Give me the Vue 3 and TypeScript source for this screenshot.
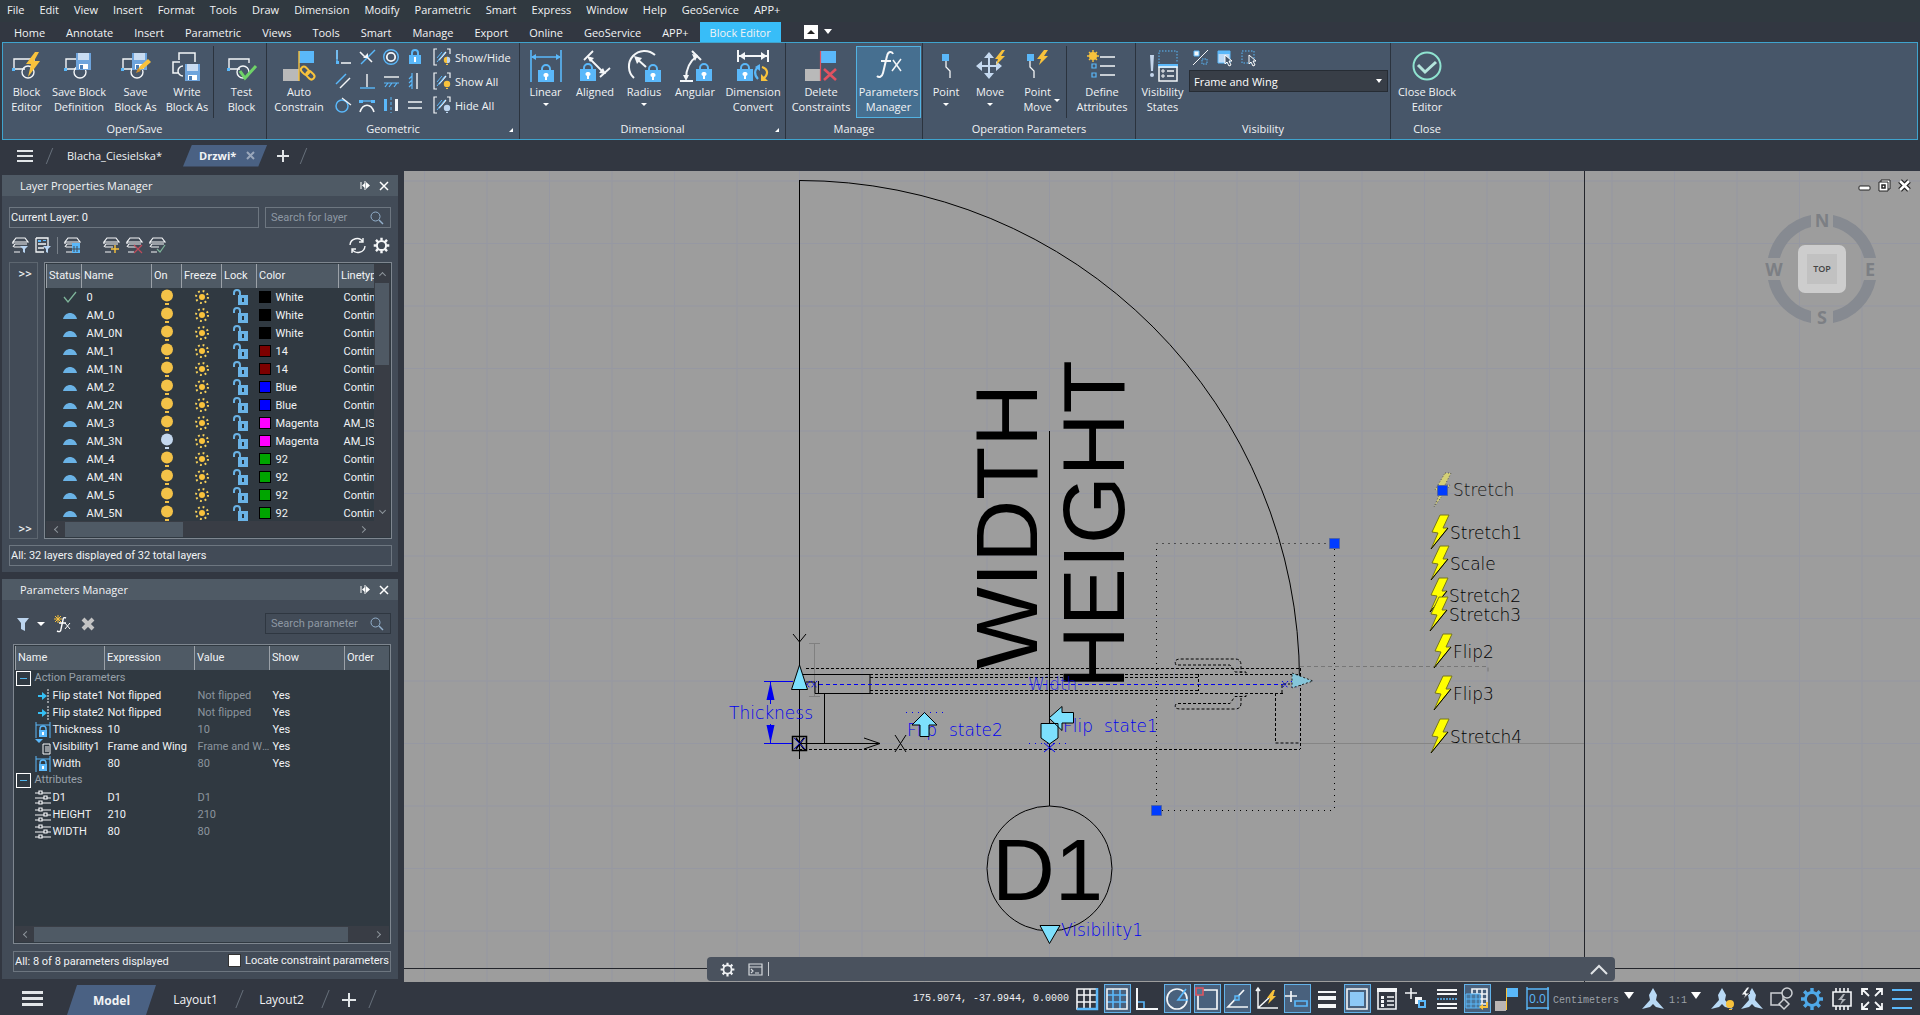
<script setup lang="ts">
import { ref } from 'vue'

interface Tool { icon: string; lines: string[]; width: number; caret?: 'below' | 'side'; active?: boolean; before?: boolean }
interface Layer { name: string; color: string; label: string; line: string; off?: boolean; current?: boolean }
interface Param { icon: string; name: string; expr: string; value: string; show: string }

const B = '#5ab8fa'
const W = '#f4f6f8'
const Y = '#f8c23c'

const lock = (x: number, y: number) =>
  `<path d="M${x + 4} ${y + 7}V${y + 5}a4 4 0 0 1 8 0v2" fill="none" stroke="${B}" stroke-width="2"/><rect x="${x}" y="${y + 6}" width="16" height="12" fill="${B}"/><path d="M${x + 8} ${y + 9}a2 2 0 0 1 1 4v3h-2v-3a2 2 0 0 1 1-4z" fill="#fff"/>`
const disk = (x: number, y: number) =>
  `<path d="M${x} ${y}h15v17h-15z" fill="#6ea4dc"/><path d="M${x + 2} ${y}h11v7h-11z" fill="#c9dcf2"/><path d="M${x + 3} ${y + 11}h9v5h-9z" fill="#fff"/><path d="M${x + 4} ${y + 12}h3v4h-3z" fill="#4a7db5"/>`
const block = `<path d="M3 19V9h20v4M3 19h11" fill="none" stroke="${W}" stroke-width="1.4"/><circle cx="17" cy="22" r="6" fill="none" stroke="${W}" stroke-width="1.4"/><path d="M1 18h3v3h-3z" fill="${B}"/>`
const wheel = (c: string) =>
  `<g fill="none" stroke="${c}"><circle cx="12" cy="12" r="6.500" stroke-width="2.800"/><path d="M12 1v4M12 19v4M1 12h4M19 12h4M4.200 4.200l3 3M16.800 16.800l3 3M19.800 4.200l-3 3M7.200 16.800l-3 3" stroke-width="3.400"/></g>`
const layers = `<path d="M4 1h9l3 4H1zM1 5v2M2 10h8M2 15h6M1 10l2-3h12" fill="none" stroke="${W}" stroke-width="1.2"/>`
const tri = `<path d="M12 1l4 7-1 5 8 9-8-2-3-3-3 3-8 2 8-9-1-5z" fill="#b8d9f5"/>`

const icons: Record<string, string> = {
  blockEditor: block + `<path d="M24 2l-9 12h5l-3 13 12-16h-6l5-9z" fill="${Y}"/>`,
  saveDef: block + disk(13, 3),
  saveAs: block + disk(12, 3) + `<path d="M18 20l2-4 8-7 3 3-8 7z" fill="${Y}"/><path d="M16 23l2-5 3 3z" fill="#c98a2b"/>`,
  writeAs: `<path d="M8 10V3h16v9M9 12H2v11h5M12 16a5 5 0 0 0 0 10" fill="none" stroke="${W}" stroke-width="1.5"/>` + disk(14, 14),
  testBlock: block + `<path d="M14 21l5 7 11-12" fill="none" stroke="#6fd268" stroke-width="3"/>`,
  auto: `<path d="M0 19h16v12h-16z" fill="#b9b9b9"/><path d="M16 1h15v12h-15z" fill="${B}"/><path d="M16 1v30" stroke="${Y}" stroke-width="1.400"/><g fill="none" stroke="${Y}" stroke-width="2"><rect x="18" y="17.500" width="9" height="6" rx="3" transform="rotate(45 22 20)"/><rect x="23" y="22" width="9" height="6" rx="3" transform="rotate(45 27 25)"/></g>`,
  linear: `<path d="M1 0v32M31 0v32M2 7h28" stroke="${B}" stroke-width="1.600"/><path d="M1 7l5-3v6zM31 7l-5-3v6z" fill="${B}"/>` + lock(8, 14),
  aligned: `<path d="M5 10l9-9M21 27l10-9M10 8l14 14" stroke="${W}" stroke-width="1.800"/><path d="M8 6l7 2-4 4zM27 24l-7-1 4-5z" fill="${W}"/>` + lock(1, 13),
  radius: `<path d="M6 28A15 15 0 0 1 27 5M8 8l10 9" fill="none" stroke="${W}" stroke-width="2"/><path d="M6 6l8 2-5 6z" fill="${W}"/>` + lock(17, 14),
  angular: `<path d="M1 31h13M7 29C7 18 11 11 18 6M13 1l9 9" fill="none" stroke="${W}" stroke-width="2"/><path d="M4 25h6l-3 6zM13 4l6 1-3 6z" fill="${W}"/>` + lock(17, 13),
  convert: `<path d="M1 0v12M31 0v12M2 6h28" stroke="${W}" stroke-width="2"/><path d="M2 6l6-4v8zM30 6l-6-4v8z" fill="${W}"/>` + lock(0, 13) + `<path d="M22 17c-5 2-5 8-1 12" fill="none" stroke="${B}" stroke-width="2.200"/><path d="M18 17l5-3v7z" fill="${B}"/><path d="M25 17c6 2 7 7 1 12" fill="none" stroke="${Y}" stroke-width="2.200"/><path d="M24 24v7h7z" fill="${Y}"/>`,
  delCon: `<path d="M0 19h15v12h-15z" fill="#b9b9b9"/><path d="M16 1h15v12h-15z" fill="${B}"/><path d="M15.500 1v30" stroke="#e05260" stroke-width="1.200"/><path d="M19 19l12 11M31 19L19 30" stroke="#e05260" stroke-width="2.600"/>`,
  fx: `<path d="M20 4c-1-3-5-3-6 2l-4 17c-1 4-4 5-6 3M8 11h10" fill="none" stroke="${W}" stroke-width="2"/><path d="M20 10l8 11M28 9l-9 12" stroke="${W}" stroke-width="1.500"/>`,
  point: `<path d="M12 4h7v7h-7z" fill="${B}"/><path d="M16 11v6l4 4v7" fill="none" stroke="${W}" stroke-width="1.300"/>`,
  move: `<path d="M15 5v22M4 16h23" stroke="#c5d9f0" stroke-width="2"/><path d="M15 2l5 6h-10zM15 29l5-6h-10zM2 16l6-5v10zM28 16l-6-5v10z" fill="#c5d9f0"/><path d="M28 0l-7 9h3l-2 6 9-9h-4l4-6z" fill="${Y}"/>`,
  pointMove: `<path d="M5 4h7v7H5z" fill="${B}"/><path d="M8 11v6l4 4v7" fill="none" stroke="${W}" stroke-width="1.300"/><path d="M22 0l-7 9h4l-2 6 9-9h-4l4-6z" fill="${Y}"/>`,
  attrs: `<circle cx="7" cy="6" r="4" fill="${Y}"/><path d="M7 0v12M1 6h12M3 2l8 8M11 2L3 10" stroke="${Y}" stroke-width="1.400"/><path d="M14 7h15M14 16h15M14 25h15" stroke="${W}" stroke-width="1.400"/><path d="M6 14h4v4H6zM6 23h4v4H6z" fill="none" stroke="${B}" stroke-width="1.200"/>`,
  states: `<path d="M3 5h4l-1 16h-2z" fill="#c3d4ea"/><circle cx="5" cy="25" r="2" fill="#c3d4ea"/><path d="M12 13V1h18v12" fill="none" stroke="${B}" stroke-dasharray="1.500 1.500"/><path d="M11 14h20v4h-20z" fill="${B}"/><path d="M12 17h18v14h-18zM20 21h7M20 26h7" fill="none" stroke="${W}" stroke-width="1.500"/><path d="M15 20h2v2h-2zM15 25h2v2h-2z" fill="none" stroke="${W}"/>`,
  close: `<circle cx="16" cy="16" r="13.500" fill="none" stroke="#8fe3d0" stroke-width="2"/><path d="M7 15l7 7 11-10" fill="none" stroke="#b4e4dc" stroke-width="3"/>`
}

const mini: string[] = [
  `<path d="M2 1v9M6 14h10" stroke="${W}" stroke-width="1.400"/><path d="M2 1v11" stroke="${B}" stroke-width="1.500"/><path d="M1 12h3v3h-3z" fill="${B}"/>`,
  `<path d="M2 15L16 1" stroke="${B}" stroke-width="1.400"/><path d="M1 3l5 5M8 8l5 5" stroke="${W}" stroke-width="1.600"/><path d="M4 9h5V4z" fill="${W}"/>`,
  `<circle cx="8" cy="8" r="7.300" fill="none" stroke="${B}" stroke-width="1.400"/><circle cx="8" cy="8" r="4.200" fill="none" stroke="${W}" stroke-width="1.800"/>`,
  `<path d="M5 7V4a3 3 0 0 1 6 0v3" fill="none" stroke="${B}" stroke-width="2"/><path d="M2 6h12v9H2z" fill="${B}"/><path d="M7 8h2v5H7z" fill="#fff"/>`,
  `<path d="M1 11L11 1" stroke="${B}" stroke-width="1.400"/><path d="M5 15L15 5" stroke="${W}" stroke-width="1.400"/>`,
  `<path d="M8 1v13" stroke="${W}" stroke-width="1.400"/><path d="M1 15h15" stroke="${B}" stroke-width="1.400"/>`,
  `<path d="M1 4h15" stroke="${W}" stroke-width="1.400"/><path d="M1 10h15M2 14l3-4M6 14l3-4M11 14l3-4" stroke="${B}" stroke-width="1.200"/>`,
  `<path d="M5 0v16M5 3L2 6M5 7l-3 3M5 11l-3 3" stroke="${B}" stroke-width="1.200"/><path d="M10 0v16" stroke="${W}" stroke-width="1.400"/>`,
  `<circle cx="7" cy="9" r="6" fill="none" stroke="${B}" stroke-width="1.500"/><path d="M7 1l9 7" stroke="${W}" stroke-width="1.200"/>`,
  `<path d="M0 3h4v3H0zM12 3h4v3h-4z" fill="${B}"/><path d="M3 4h10" stroke="${B}" stroke-width="1.300"/><path d="M1 15c3-9 11-9 14 0" fill="none" stroke="${W}" stroke-width="1.600"/>`,
  `<path d="M1 2h3v12H1z" fill="${B}"/><path d="M8 0v16" stroke="${B}" stroke-dasharray="3 2"/><path d="M12 2h3v12h-3z" fill="${W}"/>`,
  `<path d="M1 5h14M1 11h14" stroke="${W}" stroke-width="1.500"/>`
]
const bracket = (c: string) =>
  `<path d="M3 0H0v16h3M13 0h3v5M5 11l7-8" fill="none" stroke="${W}" stroke-width="1.200"/><path d="M3 9l5-6M3 13l8-10" stroke="${B}"/><circle cx="13" cy="11" r="3.200" fill="${c}"/><path d="M12 15h2v1h-2z" fill="${c}"/>`
const halfBulb = `<path d="M13 7.800a3.200 3.200 0 0 1 0 6.400z" fill="#bcd4ee"/>`
const showRows = [
  { t: 'Show/Hide', s: bracket(Y) + halfBulb }, { t: 'Show All', s: bracket(Y) }, { t: 'Hide All', s: bracket('#bcd4ee') }
]
const cursor = `<path d="M8 5v9l2-2 2 4 2-1-2-4h3z" fill="#46566a" stroke="#fff"/>`
const visMini = [
  `<path d="M1 1h5v5H1z" fill="${W}" stroke="${B}"/><path d="M0 15L15 0" stroke="${W}"/><path d="M9 9h5v5H9z" fill="none" stroke="${B}" stroke-dasharray="1.500 1"/>`,
  `<path d="M1 1h12v12H1z" fill="#bcd9f5" stroke="${B}"/><path d="M1 1h12v3H1z" fill="${B}"/>` + cursor,
  `<path d="M1 1h12v12H1z" fill="none" stroke="${B}" stroke-dasharray="1.500 1.500"/>` + cursor
]

const menus = ['File', 'Edit', 'View', 'Insert', 'Format', 'Tools', 'Draw', 'Dimension', 'Modify', 'Parametric', 'Smart', 'Express', 'Window', 'Help', 'GeoService', 'APP+']
const tabs = ['Home', 'Annotate', 'Insert', 'Parametric', 'Views', 'Tools', 'Smart', 'Manage', 'Export', 'Online', 'GeoService', 'APP+', 'Block Editor']

const openSave: Tool[] = [
  { icon: 'blockEditor', lines: ['Block', 'Editor'], width: 47 },
  { icon: 'saveDef', lines: ['Save Block', 'Definition'], width: 58 },
  { icon: 'saveAs', lines: ['Save', 'Block As'], width: 55 },
  { icon: 'writeAs', lines: ['Write', 'Block As'], width: 48 },
  { icon: 'testBlock', lines: ['Test', 'Block'], width: 51, before: true }
]
const dimensional: Tool[] = [
  { icon: 'linear', lines: ['Linear'], width: 51, caret: 'below' },
  { icon: 'aligned', lines: ['Aligned'], width: 48 },
  { icon: 'radius', lines: ['Radius'], width: 50, caret: 'below' },
  { icon: 'angular', lines: ['Angular'], width: 52 },
  { icon: 'convert', lines: ['Dimension', 'Convert'], width: 64 }
]
const manage: Tool[] = [
  { icon: 'delCon', lines: ['Delete', 'Constraints'], width: 70 },
  { icon: 'fx', lines: ['Parameters', 'Manager'], width: 65, active: true }
]
const operation: Tool[] = [
  { icon: 'point', lines: ['Point'], width: 46, caret: 'below' },
  { icon: 'move', lines: ['Move'], width: 42, caret: 'below' },
  { icon: 'pointMove', lines: ['Point', 'Move'], width: 53, caret: 'side' },
  { icon: 'attrs', lines: ['Define', 'Attributes'], width: 66, before: true }
]
const groups = [
  { title: 'Open/Save', width: 264, tools: openSave, kind: '' },
  { title: 'Geometric', width: 253, tools: [{ icon: 'auto', lines: ['Auto', 'Constrain'], width: 64 }] as Tool[], kind: 'geo' },
  { title: 'Dimensional', width: 266, tools: dimensional, kind: 'dims' },
  { title: 'Manage', width: 137, tools: manage, kind: '' },
  { title: 'Operation Parameters', width: 213, tools: operation, kind: '' },
  { title: 'Visibility', width: 255, tools: [{ icon: 'states', lines: ['Visibility', 'States'], width: 53 }] as Tool[], kind: 'vis' },
  { title: 'Close', width: 72, tools: [{ icon: 'close', lines: ['Close Block', 'Editor'], width: 72 }] as Tool[], kind: 'end' }
]

const mk = (name: string, color: string, label: string, line = 'Continuous', extra: Partial<Layer> = {}): Layer => ({ name, color, label, line, ...extra })
const layerRows: Layer[] = [
  mk('0', '#000', 'White', 'Continuous', { current: true }),
  mk('AM_0', '#000', 'White'), mk('AM_0N', '#000', 'White'),
  mk('AM_1', '#7d0000', '14'), mk('AM_1N', '#7d0000', '14'),
  mk('AM_2', '#00f', 'Blue'), mk('AM_2N', '#00f', 'Blue'),
  mk('AM_3', '#f0f', 'Magenta', 'AM_ISO08W050'), mk('AM_3N', '#f0f', 'Magenta', 'AM_ISO08W050', { off: true }),
  mk('AM_4', '#00a500', '92'), mk('AM_4N', '#00a500', '92'), mk('AM_5', '#00a500', '92'), mk('AM_5N', '#00a500', '92')
]
const layerTools = [
  layers + `<path d="M8 9h8l-3 3v4l-2-1v-3z" fill="#b8d4f2"/>`,
  `<path d="M1 1h12v8M1 1v14h8M3 7h8M3 11h6" fill="none" stroke="${W}" stroke-width="1.300"/><path d="M3 3h3v2H3zM8 3h3v1H8z" fill="${B}"/><path d="M8 9h8l-3 3v4l-2-1v-3z" fill="#b8d4f2"/>`,
  layers + `<path d="M8 6h8v10H8z" fill="${B}"/><path d="M10 9v6M13 9v6M8 12h8" stroke="#424b57"/>`,
  layers + `<path d="M12 8v8M8 12h8" stroke="${Y}" stroke-width="1.400"/>`,
  layers + `<path d="M8 8l8 8M16 8l-8 8" stroke="#c04a5a" stroke-width="1.200"/>`,
  layers + `<path d="M8 12l3 3 5-7" fill="none" stroke="#7fb59b" stroke-width="1.200"/>`
]

const flipIcon = `<path d="M3 7h4V4l5 4-5 4V9H3z" fill="#35c0f5"/><path d="M13 1v14" stroke="${W}" stroke-dasharray="2 1"/>`
const dimIcon = `<path d="M1 0v16M15 0v16M1 3h14" stroke="${B}"/><path d="M5 8V7a3 3 0 0 1 6 0v1" fill="none" stroke="${B}" stroke-width="1.400"/><path d="M4 8h8v7H4z" fill="${B}"/><path d="M7 10h2v3H7z" fill="#fff"/>`
const visIcon = `<path d="M0 0h8L4 4z" fill="${B}"/><path d="M8 5h7v10H8zM10 8h4M10 10h4M10 12h4" fill="none" stroke="${W}"/>`
const attIcon = `<path d="M0 3h16M0 8h16M0 13h16" stroke="${W}" stroke-width="1.200"/><path d="M4 1h3v3H4zM9 6h3v3H9zM4 11h3v3H4z" fill="#303941" stroke="${W}" stroke-width="1.200"/>`
const paramGroups: { title: string; rows: Param[] }[] = [
  { title: 'Action Parameters', rows: [
    { icon: flipIcon, name: 'Flip state1', expr: 'Not flipped', value: 'Not flipped', show: 'Yes' },
    { icon: flipIcon, name: 'Flip state2', expr: 'Not flipped', value: 'Not flipped', show: 'Yes' },
    { icon: dimIcon, name: 'Thickness', expr: '10', value: '10', show: 'Yes' },
    { icon: visIcon, name: 'Visibility1', expr: 'Frame and Wing', value: 'Frame and Wing', show: 'Yes' },
    { icon: dimIcon, name: 'Width', expr: '80', value: '80', show: 'Yes' }] },
  { title: 'Attributes', rows: [
    { icon: attIcon, name: 'D1', expr: 'D1', value: 'D1', show: '' },
    { icon: attIcon, name: 'HEIGHT', expr: '210', value: '210', show: '' },
    { icon: attIcon, name: 'WIDTH', expr: '80', value: '80', show: '' }] }
]

const gridX = Array.from({ length: 25 }, (_, i) => 424.5 + i * 62.5)
const gridY = Array.from({ length: 13 }, (_, i) => 181 + i * 62.5)
const actions = [
  { t: 'Stretch1', x: 1431, y: 549 }, { t: 'Scale', x: 1431, y: 580 },
  { t: 'Stretch2', x: 1430, y: 612 }, { t: 'Stretch3', x: 1430, y: 631 }, { t: 'Flip2', x: 1434, y: 668 },
  { t: 'Flip3', x: 1434, y: 710 }, { t: 'Stretch4', x: 1431, y: 753 }
]

const statusA: { s: string; on?: boolean; label: string }[] = [
  { label: 'Snap', s: `<path d="M2 2h20v20H2zM2 8h20M2 15h20M9 2v20M15 2v20" fill="none" stroke="${W}" stroke-width="1.600"/><path d="M22 1v21H2" fill="none" stroke="${B}" stroke-width="2.500"/>` },
  { label: 'Grid', on: true, s: `<path d="M2 8h20M2 15h20M8 2v20M15 2v20" stroke="${B}" stroke-width="1.600"/><path d="M2 2h20v20H2z" fill="none" stroke="${W}" stroke-width="1.600"/>` },
  { label: 'Ortho', s: `<path d="M2 1v21h21" fill="none" stroke="${W}" stroke-width="2"/><path d="M3 15h6v6" fill="none" stroke="${B}" stroke-width="1.600"/>` },
  { label: 'Polar', on: true, s: `<circle cx="12" cy="12" r="10" fill="none" stroke="${W}" stroke-width="1.700"/><path d="M21 2l-8 11h10" fill="none" stroke="${B}" stroke-width="1.700"/>` },
  { label: 'Object snap', on: true, s: `<path d="M3 3h19v19H3z" fill="none" stroke="${W}" stroke-width="1.700"/><path d="M1 1h7v7H1z" fill="#54728f" stroke="#d95561" stroke-width="1.700"/>` },
  { label: 'Tracking', on: true, s: `<path d="M19 3L3 20h20" fill="none" stroke="${W}" stroke-width="1.700"/><path d="M10 9h4v4h-4z" fill="#54728f" stroke="${B}" stroke-width="1.500"/>` },
  { label: 'Dynamic UCS', s: `<path d="M3 1v20h20M3 21L18 7M1 4l2-3 2 3" fill="none" stroke="${W}" stroke-width="1.500"/><path d="M18 3l-6 8h3l-2 6 8-8h-3l2-6z" fill="${Y}"/>` },
  { label: 'Dynamic input', on: true, s: `<path d="M6 4v11M0 9h12" stroke="${W}" stroke-width="1.700"/><path d="M10 14h12v5H10z" fill="none" stroke="${B}" stroke-width="1.700"/>` },
  { label: 'Lineweight', s: `<path d="M3 5h18" stroke="${W}" stroke-width="2"/><path d="M3 11h18M3 19h18" stroke="${W}" stroke-width="4"/>` },
  { label: 'Transparency', on: true, s: `<path d="M2 2h20v20H2z" fill="none" stroke="${W}" stroke-width="1.600"/><path d="M5 5h14v14H5z" fill="#8cc8f6"/>` },
  { label: 'Quick properties', s: `<path d="M3 3h18v19H3zM12 10h7M12 14h7M12 18h7" fill="none" stroke="${W}" stroke-width="1.600"/><path d="M2 1h20v4H2zM6 9h3v3H6zM6 13h3v3H6zM6 17h3v3H6z" fill="${W}"/>` },
  { label: 'Cycling', s: `<path d="M6 1v11M0 6h12" stroke="${W}" stroke-width="1.600"/><path d="M10 10h7v7h-7z" fill="${W}"/><path d="M14 14h6v6h-6z" fill="#323741" stroke="${B}" stroke-width="2"/>` },
  { label: 'Isolines', s: `<path d="M2 3h20M2 7h20M2 17h20M2 21h20" stroke="${W}" stroke-width="2"/><path d="M2 12h20" stroke="${B}" stroke-width="1.600" stroke-dasharray="2 1"/>` },
  { label: 'Snap cycling', on: true, s: `<path d="M7 2h15v15H7zM7 7h15M7 12h15M12 2v15M17 2v15" fill="none" stroke="${W}" stroke-width="1.600"/><path d="M1 7h14v14H1z" fill="#49789f" stroke="${B}"/><path d="M1 12h14M1 17h14M6 7v14M11 7v14" stroke="${B}"/><path d="M22 15v5h-6" fill="none" stroke="${Y}" stroke-width="2"/><path d="M14 20l4-3v6z" fill="${Y}"/>` },
  { label: 'Constraints', s: `<path d="M0 14h11v10H0z" fill="#b9b4b4"/><path d="M12 1h11v9H12z" fill="${B}"/><path d="M11.500 1v22" stroke="${Y}"/>` }
]
const statusB: { s: string; label: string }[] = [
  { label: 'Annotation visibility', s: tri + `<circle cx="20" cy="17" r="4" fill="${Y}"/><path d="M19 22h3v1h-3z" fill="${Y}"/>` },
  { label: 'Annotation autoscale', s: tri + `<path d="M7 0L1 8h4l-3 5 8-7H6l4-6z" fill="${W}" stroke="#323741"/>` },
  { label: 'Workspace', s: `<path d="M1 6h12v12H1z" fill="none" stroke="#cdd0d4" stroke-width="1.500"/><circle cx="17" cy="6" r="5" fill="#323741" stroke="#cdd0d4" stroke-width="1.500"/><path d="M14 12l5 5-5 5-5-5z" fill="#323741" stroke="#cdd0d4" stroke-width="1.500"/>` },
  { label: 'Settings', s: wheel('#4fa9e8') },
  { label: 'Hardware', s: `<path d="M3 5h18v14H3z" fill="none" stroke="${W}" stroke-width="1.600"/><path d="M6 1v4M10 1v4M14 1v4M18 1v4M6 19v4M10 19v4M14 19v4M18 19v4" stroke="${W}" stroke-width="1.600"/><path d="M13 7l-5 6h4l-2 5 6-6h-4l3-5z" fill="#aeb2b8"/>` },
  { label: 'Full screen', s: `<path d="M2 8V2h6M16 2h6v6M22 16v6h-6M8 22H2v-6M2 2l7 7M22 2l-7 7M22 22l-7-7M2 22l7-7" fill="none" stroke="${W}" stroke-width="1.800"/>` },
  { label: 'Customize', s: `<path d="M2 3h20M2 12h20M2 21h20" stroke="${B}" stroke-width="2.200"/>` }
]
const dimInput = `<path d="M2 3h22M2 22h22M2 1v23M23 1v23" stroke="${B}" stroke-width="1.400"/>`
const state = ref('Frame and Wing')
const locate = ref(false)
</script>

<template>
  <div class="app">
    <nav class="menubar">
      <button v-for="m in menus" :key="m">{{ m }}</button>
    </nav>
    <nav class="tabbar">
      <button v-for="t in tabs" :key="t" :class="{ on: t === 'Block Editor' }">{{ t }}</button>
      <button class="fold" aria-label="Minimize ribbon">
        <svg width="20" height="14"><path d="M0 0h14v14H0z" fill="#fff" /><path d="M3 9h8L7 5z" fill="#222" /></svg>
        <svg width="8" height="14"><path d="M0 4h8l-4 5z" fill="#fff" /></svg>
      </button>
    </nav>

    <section class="ribbon">
      <div v-for="g in groups" :key="g.title" class="group" :class="g.kind" :style="{ width: g.width + 'px' }">
        <div class="tools">
          <template v-for="t in g.tools" :key="t.icon">
            <span v-if="t.before" class="divider"></span>
            <button class="tool" :class="{ active: t.active }" :style="{ width: t.width + 'px' }">
              <svg width="32" height="32" viewBox="0 0 32 32" v-html="icons[t.icon]"></svg>
              <span v-for="l in t.lines" :key="l">{{ l }}</span>
              <i v-if="t.caret" class="caret" :class="t.caret"></i>
            </button>
          </template>
          <template v-if="g.kind === 'geo'">
            <div class="minis">
              <button v-for="(m, i) in mini" :key="i" aria-label="Constraint"><svg width="16" height="16" v-html="m"></svg></button>
            </div>
            <div class="shows">
              <button v-for="r in showRows" :key="r.t"><svg width="17" height="17" v-html="r.s"></svg>{{ r.t }}</button>
            </div>
          </template>
          <div v-if="g.kind === 'vis'" class="visbox">
            <div class="vismini">
              <button v-for="(m, i) in visMini" :key="i" aria-label="Visibility mode"><svg width="17" height="17" v-html="m"></svg></button>
            </div>
            <div class="combo">
              <select v-model="state" aria-label="Visibility state"><option>Frame and Wing</option><option>Frame</option></select>
            </div>
          </div>
        </div>
        <div class="title">{{ g.title }}</div>
        <i v-if="g.kind === 'geo' || g.kind === 'dims'" class="corner"></i>
      </div>
    </section>

    <nav class="docs">
      <button class="burger" aria-label="Documents"><svg width="16" height="14"><path d="M0 2h16M0 7h16M0 12h16" stroke="#e2e5e8" stroke-width="2" /></svg></button>
      <i class="slash"></i>
      <button class="doc">Blacha_Ciesielska*</button>
      <button class="doc cur">Drzwi*<svg width="9" height="9"><path d="M1 1l7 7M8 1L1 8" stroke="#9aa7bb" stroke-width="2" /></svg></button>
      <button class="plus" aria-label="New"><svg width="12" height="12"><path d="M6 0v12M0 6h12" stroke="#e2e5e8" stroke-width="2" /></svg></button>
      <i class="slash"></i>
    </nav>

    <main>
      <aside>
        <section class="panel">
          <header><h2>Layer Properties Manager</h2>
            <button aria-label="Auto-hide"><svg width="10" height="9"><path d="M1 1v7M5 0v9" stroke="#fff" /><path d="M5 2L2 4.500 5 7zM6 1l4 3.500L6 8z" fill="#fff" /></svg></button>
            <button aria-label="Close"><svg width="10" height="10"><path d="M1 1l8 8M9 1L1 9" stroke="#fff" stroke-width="1.500" /></svg></button>
          </header>
          <div class="fields">
            <div class="box current">Current Layer: 0</div>
            <div class="box search"><input placeholder="Search for layer" aria-label="Search for layer" /><svg width="14" height="14"><circle cx="5.500" cy="5.500" r="4.500" fill="none" stroke="#93b0cc" /><path d="M9 9l4 4" stroke="#93b0cc" stroke-width="1.500" /></svg></div>
          </div>
          <div class="ltools">
            <button v-for="(s, i) in layerTools" :key="i" :class="'lt' + i" aria-label="Layer tool"><svg width="16" height="17" v-html="s"></svg></button>
            <span class="grow"></span>
            <button aria-label="Refresh"><svg width="17" height="17"><path d="M1 8a7 7 0 0 1 13-3M16 9a7 7 0 0 1-13 3M14 1v4h-4M3 16v-4h4" fill="none" stroke="#f4f6f8" stroke-width="1.400" /></svg></button>
            <button aria-label="Settings"><svg width="17" height="17" viewBox="0 0 24 24" v-html="wheel('#f4f6f8')"></svg></button>
          </div>
          <div class="lbody">
            <div class="strip"><button>&gt;&gt;</button><button>&gt;&gt;</button></div>
            <div class="grid">
              <div class="gridmain">
                <div class="clip">
                  <table>
                    <colgroup><col style="width: 35px" /><col style="width: 70px" /><col style="width: 30px" /><col style="width: 40px" /><col style="width: 35px" /><col style="width: 82px" /><col /></colgroup>
                    <thead><tr><th>Status</th><th>Name</th><th>On</th><th>Freeze</th><th>Lock</th><th>Color</th><th>Linetype</th></tr></thead>
                    <tbody>
                      <tr v-for="r in layerRows" :key="r.name">
                        <td class="ic st">
                          <svg width="14" height="12"><path v-if="r.current" d="M1 6l4 5 8-10" fill="none" stroke="#7fb59b" stroke-width="1.300" /><path v-else d="M0 10c2-8 12-8 14 0z" fill="#6ab3e6" /></svg>
                        </td>
                        <td>{{ r.name }}</td>
                        <td class="ic"><svg width="12" height="16"><circle cx="6" cy="6.500" r="6" :fill="r.off ? '#c3d7ee' : '#f3c248'" /><path d="M4 14h4v2H4z" :fill="r.off ? '#c3d7ee' : '#f3c248'" /></svg></td>
                        <td class="ic"><svg width="14" height="14"><circle cx="7" cy="7" r="3" fill="#f8c23c" /><circle cx="7" cy="7" r="6" fill="none" stroke="#f8d35c" stroke-width="2" stroke-dasharray="1.800 2.900" /></svg></td>
                        <td class="ic lk"><svg width="15" height="16"><path d="M1 6V4a3 3 0 0 1 6 0v3" fill="none" stroke="#6ab3e6" stroke-width="2" /><path d="M5 6h10v10H5z" fill="#6ab3e6" /><path d="M9 9h2v4H9z" fill="#26323a" /></svg></td>
                        <td class="cl"><i class="sw" :style="{ background: r.color }"></i>{{ r.label }}</td>
                        <td>{{ r.line }}</td>
                      </tr>
                    </tbody>
                  </table>
                </div>
                <div class="vbar"><span class="v up"></span><span class="vthumb"></span><span class="v down"></span></div>
              </div>
              <div class="hbar lh"><span class="h left"></span><span class="hthumb"></span><span class="h right"></span></div>
            </div>
          </div>
          <div class="box foot">All: 32 layers displayed of 32 total layers</div>
        </section>

        <section class="panel params">
          <header><h2>Parameters Manager</h2>
            <button aria-label="Auto-hide"><svg width="10" height="9"><path d="M1 1v7M5 0v9" stroke="#fff" /><path d="M5 2L2 4.500 5 7zM6 1l4 3.500L6 8z" fill="#fff" /></svg></button>
            <button aria-label="Close"><svg width="10" height="10"><path d="M1 1l8 8M9 1L1 9" stroke="#fff" stroke-width="1.500" /></svg></button>
          </header>
          <div class="ptools">
            <button aria-label="Filter"><svg width="28" height="14"><path d="M0 1h12L8 6v8l-4-2V6z" fill="#bcd4ee" /><path d="M20 5h8l-4 4z" fill="#fff" /></svg></button>
            <button aria-label="New parameter"><svg width="18" height="18"><path d="M4 0v8M0 4h8M1 1l6 6M7 1L1 7" stroke="#f8c23c" /><path d="M12 3c-2-1-3 0-3 2L7 14c0 3-2 3-4 2M5 8h7" fill="none" stroke="#fff" stroke-width="1.400" /><path d="M11 8l5 6M16 8l-5 6" stroke="#fff" /></svg></button>
            <button aria-label="Delete parameter"><svg width="14" height="14"><path d="M2 2l10 10M12 2L2 12" stroke="#c3c3c3" stroke-width="4" /></svg></button>
            <span class="grow"></span>
            <div class="box search dark"><input placeholder="Search parameter" aria-label="Search parameter" /><svg width="14" height="14"><circle cx="5.500" cy="5.500" r="4.500" fill="none" stroke="#93b0cc" /><path d="M9 9l4 4" stroke="#93b0cc" stroke-width="1.500" /></svg></div>
          </div>
          <div class="grid pgrid">
            <div class="pclip">
              <table>
                <colgroup><col style="width: 89px" /><col style="width: 90px" /><col style="width: 75px" /><col style="width: 75px" /><col /></colgroup>
                <thead><tr><th>Name</th><th>Expression</th><th>Value</th><th>Show</th><th>Order</th></tr></thead>
                <tbody v-for="g in paramGroups" :key="g.title">
                  <tr class="gr"><td colspan="5"><i class="fold2"></i>{{ g.title }}</td></tr>
                  <tr v-for="r in g.rows" :key="r.name">
                    <td class="pn"><svg width="16" height="16" v-html="r.icon"></svg>{{ r.name }}</td>
                    <td>{{ r.expr }}</td><td class="faint">{{ r.value }}</td><td>{{ r.show }}</td><td></td>
                  </tr>
                </tbody>
              </table>
            </div>
            <div class="hbar"><span class="h left"></span><span class="hthumb wide"></span><span class="h right"></span></div>
          </div>
          <div class="box foot">All: 8 of 8 parameters displayed
            <label><input v-model="locate" type="checkbox" />Locate constraint parameters</label>
          </div>
        </section>
      </aside>

      <div class="canvas">
        <svg class="drawing" viewBox="404 171 1516 811" preserveAspectRatio="xMinYMin slice">
          <g stroke="#9295a6" stroke-width="1" opacity=".6">
            <path v-for="x in gridX" :key="x" :d="`M${x} 171V982`" />
            <path v-for="y in gridY" :key="y" :d="`M404 ${y}H1920`" />
          </g>
          <g fill="none" stroke="#23252b"><path d="M1584.500 171V982M404 968.500H1920" /></g>
          <path d="M1300 743.500H1584" stroke="#858585" /><path d="M1300 666.500H1488V672" fill="none" stroke="#777" stroke-dasharray="4 3" />
          <path d="M809 643.500H820M814.500 643V696M809 696.500H820" stroke="#808080" fill="none" />

          <g class="big">
            <text transform="translate(1037 669) rotate(-90)">WIDTH</text>
            <text transform="translate(1124 689) rotate(-90)">HEIGHT</text>
            <text x="992" y="900">D1</text>
          </g>

          <g fill="none" stroke="#000">
            <path d="M799.500 180V759M799.500 180.500A500 500 0 0 1 1299.500 680.500M1049.500 431V806" />
            <circle cx="1049.500" cy="868.500" r="62.500" />
            <path d="M799 743.500H880M864 738l16 5.500-16 5.500M895 735l11 17M906 735l-11 17M793 634l6.500 8 6.500-8" />
            <path d="M803 674.500H870V693.500H815V682H806M818.500 681V693M824.500 693V743" />
            <g stroke-dasharray="3 2">
              <path d="M806 668.500H1300M870 674.500H1300M870 677.500H1198M870 690.500H1198M870 693.500H1283M799 749.500H1300M1198.500 674V691M1275.500 693V743H1300M1300.500 668V749M1282 693V684H1290" />
              <path d="M1176 665q-3-6 5-6h54q6 0 6 6v8M1178 665h52l5 7h11v3M1176 704q-3 5 5 5h54q6 0 6-6v-7M1178 703.500h52l5-7h11v-3" />
            </g>
            <g stroke-dasharray="1 5">
              <path d="M1156.500 549V805M1156.500 543.500H1334M1334.500 543V810M1156 810.500H1334" />
            </g>
          </g>
          <g fill="none" stroke="#0000f0">
            <path d="M819 684.500H1283" stroke-dasharray="4 3" />
            <path d="M764 681.500H793M764 743.500H793M770.500 682V704M770.500 724V743M1044 743l11 9M1055 743l-11 9" />
            <path d="M804 681l6 7M810 681l-6 7M811 681l6 7M817 681l-6 7M1282 681l6 7M1288 681l-6 7M1291 681l6 7M1297 681l-6 7" stroke-dasharray="2 1" />
            <path d="M906 712.500H943M1029 743.500H1071" stroke-dasharray="1 5" />
          </g>
          <path d="M770.500 682l4 18h-8zM770.500 743l4-18h-8z" fill="#0000f0" />
          <g class="cad blue">
            <text x="729" y="719">Thickness</text>
            <text x="907" y="736">Flip <tspan x="949">state2</tspan></text>
            <text x="1063" y="732">Flip <tspan x="1104">state1</tspan></text>
            <text x="1061" y="936">Visibility1</text>
            <text x="1028" y="690" opacity=".7">Width</text>
          </g>
          <g fill="#7de0fd" stroke="#000">
            <path d="M799.500 665l8 24.500h-16zM924.500 712.500l12.500 12.500h-8v11.500h-9V725h-8zM1049 718l13-11.500v6h11.500v10.500H1062v7.500zM1041 723.500h17V738l-8.500 6-8.500-6zM1040 925.500h20l-10.500 18z" />
          </g>
          <path d="M1292 673l21 8-21 7z" fill="#86c6da" stroke="#222" stroke-dasharray="2 2" />
          <path d="M792.500 736.500h14v14h-14zM796 738l8 11M804 738l-8 11" fill="none" stroke="#000" stroke-width="1.500" />
          <path d="M794 738l11 11M805 738l-11 11" stroke="#1010c0" />

          <g class="cad">
            <path d="M1445 473h6l-6 12h5l-16 22 7-16-6-1z" fill="#d3cf76" stroke="#555" stroke-dasharray="1 2" />
            <text x="1453" y="496" opacity=".85">Stretch</text>
            <g v-for="a in actions" :key="a.t">
              <path :d="`M${a.x} ${a.y}l7-16-6-1 8-17h9l-6 13h5z`" fill="#ffff00" stroke="#77761e" stroke-width="1" />
              <path :d="`M${a.x} ${a.y}l17-21`" stroke="#000" />
              <text :x="a.x + 19" :y="a.y - 10">{{ a.t }}</text>
            </g>
          </g>
          <g fill="#003cff" stroke="#5064a0"><path d="M1437.500 485.500h10v10h-10zM1329.500 538.500h10v10h-10zM1151.500 805.500h10v10h-10z" /></g>
        </svg>

        <div class="winctl">
          <button aria-label="Minimize"><svg width="13" height="13"><rect x="1" y="7" width="11" height="4" rx="1" fill="#fff" stroke="#222" /></svg></button>
          <button aria-label="Restore"><svg width="13" height="13"><path d="M3 1h9v9H3z" fill="#fff" stroke="#222" /><path d="M1 3h9v9H1z" fill="#fff" stroke="#222" /><path d="M4 6h3v3H4z" fill="none" stroke="#222" stroke-width="1.500" /></svg></button>
          <button aria-label="Close drawing"><svg width="13" height="13"><path d="M2 2l9 9M11 2l-9 9" stroke="#222" stroke-width="5" /><path d="M2 2l9 9M11 2l-9 9" stroke="#fff" stroke-width="2.500" /></svg></button>
        </div>

        <svg class="cube" width="120" height="120" viewBox="-60 -60 120 120">
          <path d="M-54 -11A55 55 0 0 1 -11 -54V-42A43 43 0 0 0 -42 -11zM54 -11A55 55 0 0 0 11 -54V-42A43 43 0 0 1 42 -11zM-54 11A55 55 0 0 0 -11 54V42A43 43 0 0 1 -42 11zM54 11A55 55 0 0 1 11 54V42A43 43 0 0 0 42 11z" fill="#868a91" />
          <rect x="-24" y="-24" width="48" height="48" rx="7" fill="#cdcdcd" /><rect x="-15" y="-15" width="30" height="30" fill="#c1c1c1" />
          <g class="dirs"><text y="-42">N</text><text y="55">S</text><text x="-48" y="7">W</text><text x="48" y="7">E</text></g>
          <text class="top" y="3">TOP</text>
        </svg>

        <div class="cmd">
          <button aria-label="Options"><svg width="15" height="15" viewBox="0 0 24 24" v-html="wheel('#f0f2f4')"></svg></button>
          <label for="cmdline"><svg width="15" height="13"><path d="M1 1h13v11H1zM1 4h13M3 6l2 2-2 2M7 10h4" fill="none" stroke="#d5d9dd" stroke-width="1.200" /></svg></label>
          <input id="cmdline" aria-label="Command" />
          <button aria-label="Expand"><svg width="18" height="11"><path d="M1 10l8-8 8 8" fill="none" stroke="#e0e3e6" stroke-width="2" /></svg></button>
        </div>
      </div>
    </main>

    <footer>
      <button class="burger" aria-label="Layouts"><svg width="21" height="15"><path d="M0 1.500h21M0 7.500h21M0 13.500h21" stroke="#e2e5e8" stroke-width="3" /></svg></button>
      <button class="model">Model</button>
      <button class="lay">Layout1</button><i class="slash"></i>
      <button class="lay">Layout2</button><i class="slash"></i>
      <button class="plus" aria-label="New layout"><svg width="14" height="14"><path d="M7 0v14M0 7h14" stroke="#e2e5e8" stroke-width="2" /></svg></button><i class="slash"></i>
      <span class="grow"></span>
      <span class="coords">175.9074, -37.9944, 0.0000</span>
      <button v-for="s in statusA" :key="s.label" class="sb" :class="{ on: s.on }" :aria-label="s.label"><svg width="24" height="24" v-html="s.s"></svg></button>
      <button class="sb units" aria-label="Units"><svg width="25" height="25"><g v-html="dimInput"></g><text x="12.500" y="17">0.0</text></svg></button>
      <button class="txt">Centimeters</button><i class="down3"></i>
      <button class="sb" aria-label="Annotation scale"><svg width="24" height="24" v-html="tri"></svg></button>
      <button class="txt">1:1</button><i class="down3 b"></i>
      <button v-for="s in statusB" :key="s.label" class="sb" :aria-label="s.label"><svg width="24" height="24" v-html="s.s"></svg></button>
    </footer>
  </div>
</template>

<style>
body { margin: 0; background: #323741; }
</style>

<style scoped>
.app { height: 100vh; display: flex; flex-direction: column; overflow: hidden; background: #323741; color: #f1f3f5; font: 11px/15px 'Open Sans', 'Noto Sans', sans-serif; }
* { box-sizing: border-box; }
button { background: none; border: 0; padding: 0; margin: 0; color: inherit; font: inherit; white-space: nowrap; }
svg { display: block; overflow: visible; flex: none; }
.grow { flex: 1; }
.menubar { display: flex; gap: 1px; height: 22px; background: #303940; flex: none; }
.menubar button { padding: 0 7px 4px; }
.tabbar { display: flex; gap: 1px; height: 20px; padding-left: 4px; flex: none; }
.tabbar button { padding: 0 10px; }
.tabbar .on { background: #38bdf8; }
.tabbar .fold { display: flex; align-items: center; padding: 0; margin-left: 22px; }

.ribbon { display: flex; height: 98px; margin: 0 2px; border: 1px solid #3fa3cd; background: #475669; flex: none; }
.group { display: flex; flex-direction: column; border-right: 1px solid #2b333e; position: relative; flex: none; }
.group.end { border: 0; }
.tools { display: flex; height: 76px; padding-top: 3px; }
.tool { display: flex; flex-direction: column; align-items: center; height: 72px; padding-top: 3px; border: 1px solid transparent; position: relative; flex: none; }
.tool svg { margin-bottom: 2px; }
.tool.active { background: #466f90; border-color: #52b2e2; }
.divider { width: 1px; height: 72px; margin: 0 2px; background: #2b333e; flex: none; }
.caret { border: 3px solid transparent; border-top-color: #fff; border-bottom: 0; }
.caret.below { margin-top: 4px; }
.caret.side { position: absolute; right: 3px; top: 52px; }
.title { text-align: center; line-height: 22px; }
.corner { position: absolute; right: 6px; bottom: 7px; border: 2px solid; border-color: transparent #fff #fff transparent; }
.minis { display: grid; grid-template-columns: repeat(4, 24px); grid-template-rows: repeat(3, 24px); margin-top: -1px; align-self: flex-start; }
.minis button { display: grid; place-items: center; }
.shows { display: flex; flex-direction: column; margin: -1px 0 0 7px; }
.shows button { display: flex; align-items: center; gap: 4px; height: 24px; }
.visbox { display: flex; flex-direction: column; flex: 1; padding-right: 2px; }
.vismini { display: flex; height: 24px; }
.vismini button { width: 24px; display: grid; place-items: center; }
.combo { position: relative; }
.combo::after { content: ''; position: absolute; right: 6px; top: 9px; border: 3px solid transparent; border-top: 4px solid #fff; border-bottom: 0; }
.combo select { appearance: none; width: 100%; height: 22px; padding: 0 4px; font: inherit; color: #fff; background: #383e47; border: 1px solid #262c34; border-radius: 0; }

.docs { display: flex; align-items: center; height: 31px; flex: none; padding: 0 0 0 17px; }
.burger { width: 32px; display: flex; }
.slash { width: 1px; height: 16px; background: #68717c; transform: skewX(-22deg); }
.doc { padding: 0 18px 0 17px; }
.doc.cur { display: flex; align-items: center; gap: 10px; height: 22px; padding: 0 12px 0 16px; font-weight: 700; background: #4a6183; clip-path: polygon(9px 0, 100% 0, calc(100% - 9px) 100%, 0 100%); margin-left: 3px; }
.docs .plus { margin: 0 14px 0 10px; }

main { flex: 1; display: flex; min-height: 0; }
aside { width: 404px; flex: none; display: flex; flex-direction: column; gap: 7px; padding: 4px 6px 3px 2px; font: 11px/14px Roboto, 'Liberation Sans', sans-serif; }
.panel { background: #424b57; display: flex; flex-direction: column; }
.params { flex: 1; min-height: 0; }
.panel header { display: flex; align-items: center; gap: 9px; height: 21px; padding: 0 9px 0 18px; background: #4f5a65; }
.panel h2 { margin: 0; flex: 1; font: 11px/15px 'Open Sans', sans-serif; }
.fields { display: flex; gap: 6px; padding: 11px 7px 0; }
.box { height: 21px; border: 1px solid #6d7680; display: flex; align-items: center; padding: 0 1px; }
.current { flex: 1; }
.search { width: 126px; padding: 0 6px 0 5px; }
.search.dark { border-color: #2f3741; }
.search input { flex: 1; min-width: 0; padding: 0; background: none; border: 0; outline: 0; font: inherit; color: #fff; }
.search input::placeholder { color: #8e98a3; opacity: 1; }
.ltools { display: flex; align-items: center; gap: 7px; height: 34px; padding: 0 8px 0 10px; }
.lt2 { padding-left: 6px; margin-left: -1px; border-left: 1px solid #788089; }
.lt3 { margin-left: 16px; }
.lbody { display: flex; gap: 6px; padding: 0 6px 0 7px; height: 277px; }
.strip { width: 29px; border: 1px solid #5d6670; display: flex; flex-direction: column; justify-content: space-between; padding: 4px 0 2px; font-size: 13px; }
.strip button { padding-left: 3px; }
.grid { flex: 1; min-width: 0; border: 1px solid #7e868f; padding: 1px; background: #303941; display: flex; flex-direction: column; }
.gridmain { flex: 1; min-height: 0; display: flex; }
.clip { flex: 1; min-width: 0; overflow: hidden; }
table { width: 100%; table-layout: fixed; border-collapse: collapse; }
th { height: 24px; padding: 0 0 0 2px; text-align: left; font-weight: 400; background: #4f5a65; border-left: 1px solid #9ba1a8; white-space: nowrap; overflow: hidden; text-overflow: clip; }
td { height: 18px; padding: 2px 0 0 5px; white-space: nowrap; overflow: hidden; }
td.ic { padding: 0; line-height: 0; }
td.ic svg { margin: 0 auto; }
td.st { padding-left: 12px; }
td.lk { padding-left: 2px; }
td.cl { padding-left: 2px; }
.sw { display: inline-block; width: 12px; height: 12px; margin-right: 5px; border: 1px solid #000; vertical-align: -2px; }
.vbar { width: 16px; background: #393d45; display: flex; flex-direction: column; align-items: center; }
.v, .h { width: 5px; height: 5px; border: solid #8d949b; border-width: 1px 0 0 1px; }
.v.up { transform: rotate(45deg); margin: 9px 0 5px; }
.v.down { transform: rotate(225deg); margin: auto 0 8px; }
.vthumb { width: 14px; height: 82px; background: #4f5964; }
.hbar { height: 16px; background: #393d45; display: flex; align-items: center; padding: 0 9px; flex: none; }
.hbar.lh { padding-right: 25px; }
.h.left { transform: rotate(-45deg); margin-right: 5px; }
.h.right { transform: rotate(135deg); margin-left: auto; }
.hthumb { width: 118px; height: 15px; background: #4f5a65; }
.hthumb.wide { width: 314px; }
.foot { margin: 6px 6px 6px 7px; }
.ptools { display: flex; align-items: center; gap: 9px; height: 44px; padding: 3px 7px 0 15px; }
.pgrid { margin: 0 7px 0 11px; min-height: 0; }
.pclip { flex: 1; min-height: 0; overflow: hidden; }
.pgrid td { height: 17px; padding: 0 0 0 3px; text-overflow: ellipsis; }
.pgrid td.pn { padding-left: 19px; overflow: visible; }
.pn svg { display: inline-block; vertical-align: middle; margin: -2px 2px -2px 0; }
.pgrid .gr td { padding-left: 0; color: #98a1aa; }
.faint { color: #8c959e; }
.fold2 { display: inline-block; width: 15px; height: 15px; margin-right: 4px; border: 1px solid #fff; vertical-align: middle; background: linear-gradient(#4fb3e8, #4fb3e8) center / 7px 1px no-repeat; }
.params .foot { margin: 7px 7px 7px 11px; justify-content: space-between; }
.foot label { display: flex; align-items: center; gap: 4px; padding-bottom: 2px; }
.foot input { appearance: none; width: 13px; height: 13px; margin: 0; background: #fff; border: 1px solid #333; }

.canvas { flex: 1; min-width: 0; position: relative; background: #9d9d9d; overflow: hidden; }
.drawing { width: 100%; height: 100%; }
.big { font: 87px 'Liberation Sans', Arial, sans-serif; fill: #000; }
.cad { font: 200 17px 'DejaVu Sans Light', 'DejaVu Sans', sans-serif; fill: #000; }
.cad.blue { fill: #0000f0; }
.winctl { position: absolute; top: 8px; right: 9px; display: flex; gap: 7px; }
.cube { position: absolute; top: 38px; right: 38px; font-family: 'Open Sans', sans-serif; text-anchor: middle; }
.dirs { font-size: 18px; font-weight: 700; fill: #7c7f84; }
.top { font-size: 9px; font-weight: 600; fill: #444; }
.cmd { position: absolute; left: 303px; right: 305px; bottom: 1px; height: 24px; display: flex; align-items: center; gap: 13px; padding: 0 7px 0 13px; border-radius: 4px; background: #4a525e; }
.cmd input { flex: 1; min-width: 0; height: 14px; border: 0; border-left: 1px solid #c7cbd0; background: none; outline: 0; color: #fff; margin-left: -8px; }

footer { height: 33px; flex: none; display: flex; align-items: center; padding: 0 3px 0 22px; font-size: 12px; }
footer .burger { width: 45px; }
.model { width: 89px; height: 30px; align-self: flex-end; font-weight: 700; background: #4a6183; clip-path: polygon(10px 0, 100% 0, calc(100% - 10px) 100%, 0 100%); }
.lay { width: 63px; margin: 2px 10px 0 8px; }
footer .plus { margin: 2px 14px 0; }
footer .slash { height: 18px; margin: 0 2px; }
.coords { font: 10px/14px 'Liberation Mono', monospace; margin-right: 4px; }
.sb { width: 27px; height: 29px; margin: 0 2px 0 1px; display: grid; place-items: center; border: 1px solid transparent; flex: none; }
.sb.on { background: #49617d; border-color: #62b2ea; }
.units text { font: 12px 'Open Sans', sans-serif; fill: #5ab8fa; text-anchor: middle; }
.txt { font: 10px/14px 'Liberation Mono', monospace; color: #9ca1a8; padding-top: 4px; }
.down3 { border: 5px solid transparent; border-top: 7px solid #fff; border-bottom: 0; margin: 0 5px 6px; }
.down3.b { margin: 0 6px 6px 4px; }
</style>
